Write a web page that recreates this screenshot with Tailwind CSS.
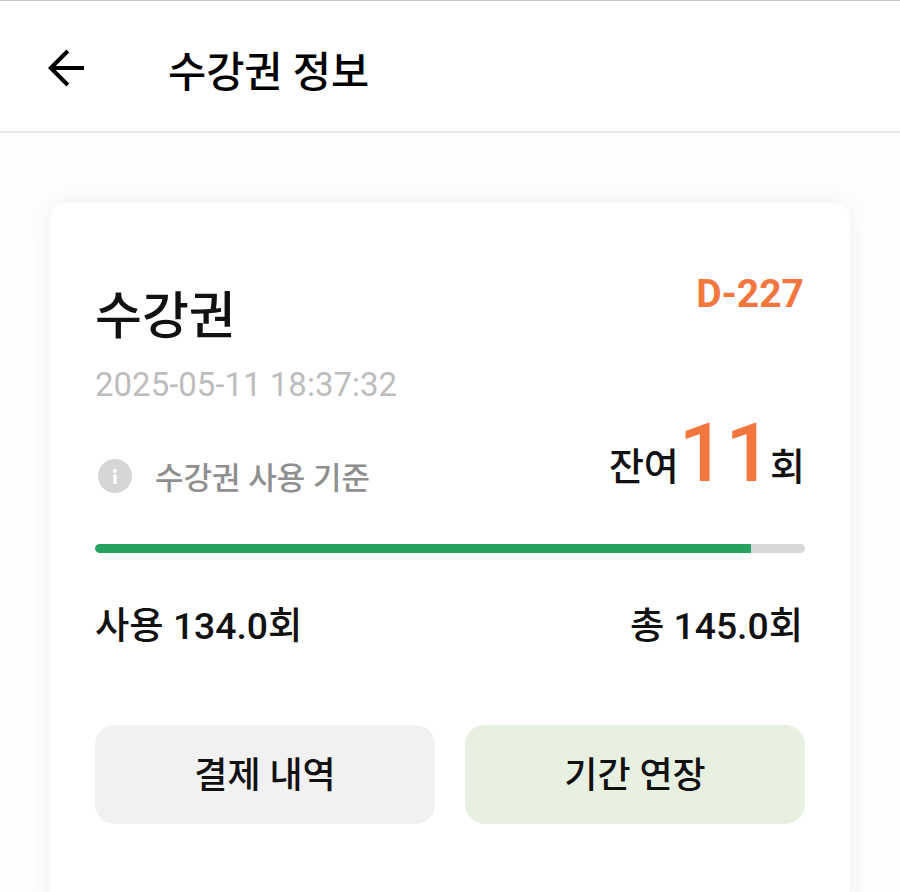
<!doctype html>
<html lang="ko">
<head>
<meta charset="utf-8">
<script src="https://cdn.jsdelivr.net/npm/@tailwindcss/browser@4"></script>
</head>
<body class="bg-[#fefefe] font-['Roboto','Noto_Sans_CJK_KR',sans-serif] overflow-hidden">
<div class="w-[900px] h-[892px] overflow-hidden border-t border-[#c8c8c8]">
  <header class="h-[132px] bg-white border-b-2 border-[#e8e8e8] flex items-center">
    <svg class="ml-[42px] mt-[3px] w-[48px] h-[48px]" viewBox="0 0 24 24" fill="none" stroke="#000" stroke-width="2"><path d="M21 12H4.5M12.9 3.5 4.4 12l8.5 8.5"/></svg>
    <h1 class="ml-[78px] text-[41.5px] font-medium text-black leading-none mt-[14px]">수강권 정보</h1>
  </header>
  <section class="mt-[70px] mx-[50px] h-[720px] bg-white rounded-[14px] shadow-[0_0_28px_rgba(0,0,0,0.06)] px-[45px] pt-[84px]">
    <div class="flex justify-between items-start">
      <h2 class="text-[51px] font-medium text-[#111] leading-[60px]">수강권</h2>
      <span class="text-[39px] font-bold text-[#f4763f] leading-none mt-[-12px] mr-[1px]">D-227</span>
    </div>
    <p class="mt-[18px] text-[33px] text-[#bdbdbd] leading-[40px]">2025-05-11 18:37:32</p>
    <div class="flex justify-between items-end mt-[12px] h-[85px]">
      <div class="flex items-center mb-[3px]">
        <svg class="ml-[3px] w-[34px] h-[34px] mb-[6px]" viewBox="0 0 24 24"><circle cx="12" cy="12" r="12" fill="#d6d6d6"/><circle cx="12" cy="8.4" r="1.5" fill="#fff"/><rect x="10.8" y="11" width="2.4" height="6.6" fill="#fff"/></svg>
        <span class="ml-[23px] mb-[2px] text-[31px] font-medium text-[#8f8f8f] leading-none">수강권 사용 기준</span>
      </div>
      <div class="flex items-end text-[#111] font-medium mb-[8px]">
        <span class="text-[38px] leading-[54px]">잔여</span>
        <span class="text-[82px] text-[#f4763f] leading-[72px] mr-[-2px] mb-[5px]">11</span>
        <span class="text-[38px] leading-[54px]">회</span>
      </div>
    </div>
    <div class="mt-[42px] h-[9px] rounded-full bg-[#d8d8d8] overflow-hidden">
      <div class="h-full bg-[#25a25f] rounded-l-full" style="width:92.4%"></div>
    </div>
    <div class="mt-[49px] flex justify-between text-[37.3px] font-medium text-[#111] leading-[48px]">
      <span>사용 134.0회</span>
      <span class="mr-[2px]">총 145.0회</span>
    </div>
    <div class="mt-[75px] grid grid-cols-2 gap-[30px]">
      <button class="h-[99px] pt-[3px] rounded-[20px] bg-[#f1f1f1] text-[36px] font-medium text-[#111]">결제 내역</button>
      <button class="h-[99px] pt-[3px] rounded-[20px] bg-[#e8f0e1] text-[36px] font-medium text-[#111]">기간 연장</button>
    </div>
  </section>
</div>
</body>
</html>
